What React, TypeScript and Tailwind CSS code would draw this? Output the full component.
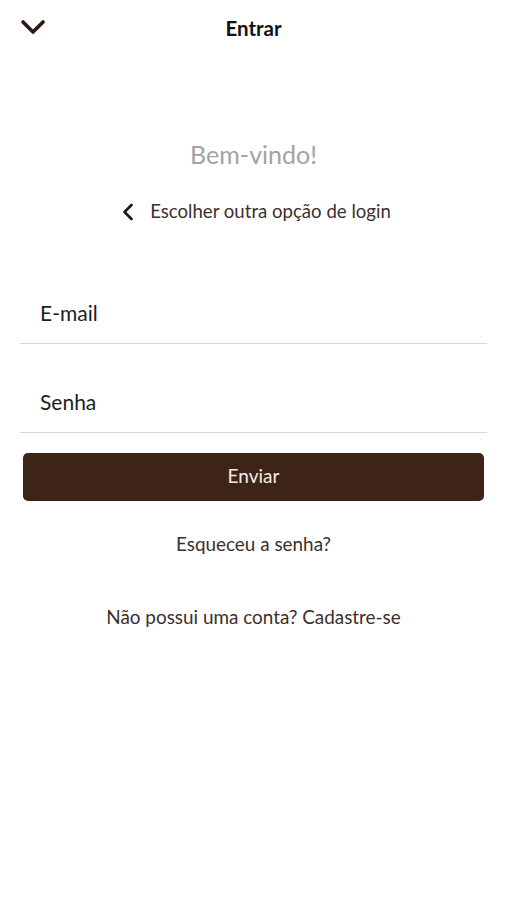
import { ChevronDown, ChevronLeft } from 'lucide-react';

export default function App() {
  return (
    <div className="flex min-h-[900px] w-full flex-col bg-white font-['Lato',sans-serif] text-[#2a1f1b]">
      <header className="relative flex h-[56px] items-center justify-center">
        <button type="button" className="absolute left-[13px] top-[7px] text-[#2b1a12]">
          <ChevronDown size={40} strokeWidth={2.2} />
        </button>
        <h1 className="text-[20.5px] font-bold text-[#111]">Entrar</h1>
      </header>

      <section className="mt-[80px] flex flex-col items-center">
        <p className="text-[25px] text-[#a3a3a3]">Bem-vindo!</p>
        <button type="button" className="mt-[24px] flex items-center gap-[8px] text-[18.6px] text-[#3b302c]">
          <ChevronLeft size={28} strokeWidth={2.3} className="-ml-[2px] text-[#231814]" />
          <span>Escolher outra opção de login</span>
        </button>
      </section>

      <form className="mt-[54px] flex flex-col px-[20px]">
        <label className="flex h-[64px] items-center border-b border-[#d8d8d8] pl-[20px] pt-[4px] text-[21px] text-[#1d1d1d]">
          E-mail
        </label>
        <label className="mt-[25px] flex h-[64px] items-center border-b border-[#d8d8d8] pl-[20px] pt-[4px] text-[21px] text-[#1d1d1d]">
          Senha
        </label>
        <button
          type="button"
          className="mx-[3px] mt-[20px] h-[48px] rounded-[5px] bg-[#3e2418] text-[19px] text-[#f3ece8]"
        >
          Enviar
        </button>
      </form>

      <div className="mt-[31px] flex flex-col items-center gap-[49px] text-[18.9px] text-[#3b302c]">
        <a className="leading-[24px]">Esqueceu a senha?</a>
        <a className="leading-[24px]">Não possui uma conta? Cadastre-se</a>
      </div>
    </div>
  );
}
